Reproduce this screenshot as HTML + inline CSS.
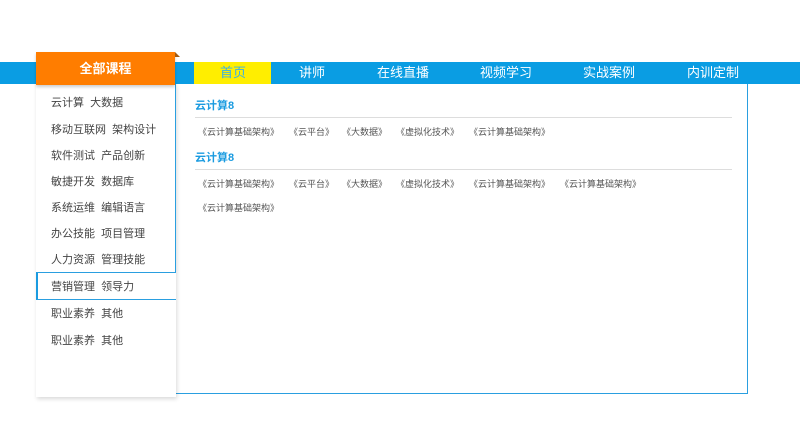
<!DOCTYPE html>
<html><head><meta charset="utf-8"><style>
*{margin:0;padding:0;box-sizing:border-box}
body{width:800px;height:434px;background:#fff;position:relative;overflow:hidden;font-family:"Liberation Sans","Noto Sans CJK SC",sans-serif}
.a{position:absolute;white-space:nowrap}
.bar{left:0;top:62px;width:800px;height:22px;background:#0a9de3}
.nav{top:62px;height:22px;line-height:22px;font-size:13px;color:#fff;transform:translateX(-50%)}
.side{left:36px;top:84px;width:140px;height:313px;background:#fff;box-shadow:1px 2px 4px rgba(0,0,0,.15)}
.si{left:51px;font-size:11px;color:#444}
.lk{font-size:9px;color:#555}
.h{left:195px;font-size:11px;font-weight:bold;color:#1a9be0}
.hr{left:195px;width:537px;height:1px;background:#ddd}
</style></head><body>
<div class="a bar"></div>
<div class="a" style="left:194px;top:62px;width:77px;height:22px;background:#ffee00"></div>
<div class="a nav" style="left:233px;color:#3ab0e8">首页</div>
<div class="a nav" style="left:312px">讲师</div>
<div class="a nav" style="left:403px">在线直播</div>
<div class="a nav" style="left:506px">视频学习</div>
<div class="a nav" style="left:609px">实战案例</div>
<div class="a nav" style="left:713px">内训定制</div>
<div class="a" style="left:747px;top:84px;width:1px;height:310px;background:#2a9fe0"></div>
<div class="a" style="left:175px;top:393px;width:573px;height:1px;background:#2a9fe0"></div>
<div class="a" style="left:175px;top:299px;width:1px;height:95px;background:#2a9fe0"></div>
<div class="a side"></div>
<div class="a" style="left:175px;top:84px;width:1px;height:188px;background:#2a9fe0"></div>
<div class="a" style="left:36px;top:52px;width:139px;height:33px;background:#ff7d00;box-shadow:0 2px 3px rgba(0,0,0,.2);color:#fff;font-weight:bold;font-size:13px;text-align:center;line-height:33px">全部课程</div>
<div class="a" style="left:175px;top:52px;width:0;height:0;border-left:5px solid #a35a10;border-top:5px solid transparent"></div>
<div class="a" style="left:36px;top:272px;width:140px;height:28px;border-top:1px solid #2a9fe0;border-bottom:1px solid #2a9fe0;border-left:2px solid #1a9be0;background:#fff"></div>
<div class="a si" style="top:94px">云计算&nbsp;&nbsp;大数据</div>
<div class="a si" style="top:121px">移动互联网&nbsp;&nbsp;架构设计</div>
<div class="a si" style="top:147px">软件测试&nbsp;&nbsp;产品创新</div>
<div class="a si" style="top:173px">敏捷开发&nbsp;&nbsp;数据库</div>
<div class="a si" style="top:199px">系统运维&nbsp;&nbsp;编辑语言</div>
<div class="a si" style="top:225px">办公技能&nbsp;&nbsp;项目管理</div>
<div class="a si" style="top:251px">人力资源&nbsp;&nbsp;管理技能</div>
<div class="a si" style="top:278px">营销管理&nbsp;&nbsp;领导力</div>
<div class="a si" style="top:305px">职业素养&nbsp;&nbsp;其他</div>
<div class="a si" style="top:332px">职业素养&nbsp;&nbsp;其他</div>
<div class="a h" style="top:97px">云计算8</div>
<div class="a hr" style="top:117px"></div>
<div class="a lk" style="left:198px;top:125px">《云计算基础架构》</div>
<div class="a lk" style="left:289px;top:125px">《云平台》</div>
<div class="a lk" style="left:342px;top:125px">《大数据》</div>
<div class="a lk" style="left:396px;top:125px">《虚拟化技术》</div>
<div class="a lk" style="left:469px;top:125px">《云计算基础架构》</div>
<div class="a h" style="top:149px">云计算8</div>
<div class="a hr" style="top:169px"></div>
<div class="a lk" style="left:198px;top:177px">《云计算基础架构》</div>
<div class="a lk" style="left:289px;top:177px">《云平台》</div>
<div class="a lk" style="left:342px;top:177px">《大数据》</div>
<div class="a lk" style="left:396px;top:177px">《虚拟化技术》</div>
<div class="a lk" style="left:469px;top:177px">《云计算基础架构》</div>
<div class="a lk" style="left:560px;top:177px">《云计算基础架构》</div>
<div class="a lk" style="left:198px;top:201px">《云计算基础架构》</div>
</body></html>
